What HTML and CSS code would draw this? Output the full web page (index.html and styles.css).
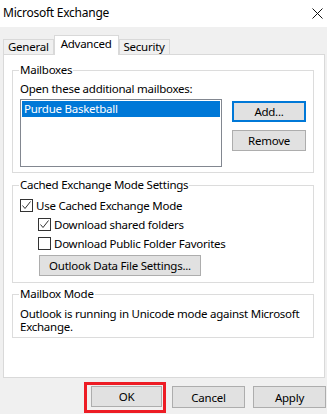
FILE: index.html
```html
<!DOCTYPE html>
<html lang="en">
<head>
    <meta charset="UTF-8">
    <title>Microsoft Exchange</title>
    <link rel="stylesheet" href="styles.css">
</head>
<body>
    <div class="dialog">
        <div class="titlebar">
            <span class="title">Microsoft Exchange</span>
            <svg class="close" width="11" height="11" viewBox="0 0 11 11">
                <path d="M0.5 0.5 L10.5 10.5 M10.5 0.5 L0.5 10.5" stroke="#111" stroke-width="1" fill="none"/>
            </svg>
        </div>

        <div class="tabs">
            <div class="tab">General</div>
            <div class="tab active">Advanced</div>
            <div class="tab">Security</div>
        </div>

        <div class="panel">
            <fieldset class="group">
                <legend>Mailboxes</legend>
                <div class="hint">Open these additional mailboxes:</div>
                <div class="mailbox-row">
                    <div class="listbox">
                        <div class="list-item selected">Purdue Basketball</div>
                    </div>
                    <div class="side-buttons">
                        <button class="btn default">Add...</button>
                        <button class="btn">Remove</button>
                    </div>
                </div>
            </fieldset>

            <fieldset class="group cached">
                <legend>Cached Exchange Mode Settings</legend>
                <label class="check">
                    <span class="box">
                        <svg width="11" height="11" viewBox="0 0 11 11"><path d="M1.5 5.5 L4 8.5 L9.5 1.5" stroke="#333" stroke-width="1" fill="none"/></svg>
                    </span>
                    Use Cached Exchange Mode
                </label>
                <div class="sub-options">
                    <label class="check">
                        <span class="box">
                            <svg width="11" height="11" viewBox="0 0 11 11"><path d="M1.5 5.5 L4 8.5 L9.5 1.5" stroke="#333" stroke-width="1" fill="none"/></svg>
                        </span>
                        Download shared folders
                    </label>
                    <label class="check">
                        <span class="box"></span>
                        Download Public Folder Favorites
                    </label>
                    <button class="btn wide">Outlook Data File Settings...</button>
                </div>
            </fieldset>

            <fieldset class="group mode">
                <legend>Mailbox Mode</legend>
                <p class="mode-text">Outlook is running in Unicode mode against Microsoft Exchange.</p>
            </fieldset>
        </div>

        <div class="footer">
            <span class="highlight"><button class="btn ok">OK</button></span>
            <button class="btn cancel">Cancel</button>
            <button class="btn apply">Apply</button>
        </div>
    </div>
</body>
</html>
```

FILE: styles.css
```css
* {
    margin: 0;
    padding: 0;
    box-sizing: border-box;
}
body {
    font-family: 'Noto Sans', sans-serif;
    font-size: 11.5px;
    letter-spacing: -0.25px;
    color: #000;
    background: #f0f0f0;
}
.dialog {
    width: 327px;
    height: 414px;
    background: #f0f0f0;
    overflow: hidden;
}
.titlebar {
    height: 27px;
    background: #fff;
    display: flex;
    align-items: center;
    justify-content: space-between;
    padding: 0 4px 2px 3px;
}
.title {
    font-size: 12px;
}
.close {
    display: block;
    margin-top: 1px;
}
.tabs {
    height: 27px;
    display: flex;
    align-items: flex-end;
    padding-left: 3px;
}
.tab {
    height: 15px;
    line-height: 14px;
    padding: 0 4px;
    border: 1px solid #d9d9d9;
    border-bottom: none;
    background: #f0f0f0;
}
.tab.active {
    height: 20px;
    line-height: 16px;
    padding: 0 6px;
    margin-bottom: -1px;
    background: #fff;
    position: relative;
    z-index: 1;
}
.panel {
    height: 324px;
    margin: 0 2px 0 3px;
    background: #fff;
    border: 1px solid #d9d9d9;
    padding: 7px 10px 0 8px;
}
.group {
    border: 1px solid #dcdcdc;
    padding: 0 7px 5px;
}
.group legend {
    line-height: 16px;
    padding: 0 1px;
    margin-left: -1px;
}
.hint {
    line-height: 16px;
    margin-top: 3px;
}
.mailbox-row {
    display: flex;
    margin-top: 2px;
}
.listbox {
    width: 202px;
    height: 68px;
    border: 1px solid #828790;
    padding: 1px;
}
.list-item {
    height: 16px;
    line-height: 16px;
    padding-left: 2px;
}
.list-item.selected {
    background: #0078d7;
    color: #fff;
}
.side-buttons {
    display: flex;
    flex-direction: column;
    gap: 8px;
    margin: 2px 0 0 10px;
}
.btn {
    font-family: inherit;
    font-size: 11.5px;
    letter-spacing: -0.25px;
    color: #000;
    width: 74px;
    height: 21px;
    background: #e1e1e1;
    border: 1px solid #adadad;
}
.btn.default {
    border: 2px solid #0078d7;
}
.cached {
    margin-top: 4px;
    padding-bottom: 6px;
}
.check {
    display: flex;
    align-items: center;
    height: 19px;
    gap: 3px;
}
.cached > .check {
    margin-top: 3px;
}
.box {
    width: 13px;
    height: 13px;
    border: 1px solid #333;
    background: #fff;
    flex: none;
}
.box svg {
    display: block;
}
.sub-options {
    padding-left: 18px;
}
.btn.wide {
    width: 162px;
    margin: 2px 0 0 1px;
}
.mode {
    margin-top: 3px;
    padding-bottom: 4px;
}
.mode-text {
    line-height: 13px;
    margin-top: 5px;
}
.footer {
    display: flex;
    justify-content: flex-end;
    align-items: flex-start;
    padding-right: 1px;
}
.highlight {
    margin-top: 4px;
    border: 3px solid #ed1c24;
    padding: 1px 1px 3px 4px;
}
.btn.ok {
    width: 71px;
    display: block;
}
.btn.cancel {
    width: 73px;
    margin: 8px 0 0 6px;
    height: 22px;
}
.btn.apply {
    width: 73px;
    margin: 8px 0 0 8px;
    height: 22px;
}
```
